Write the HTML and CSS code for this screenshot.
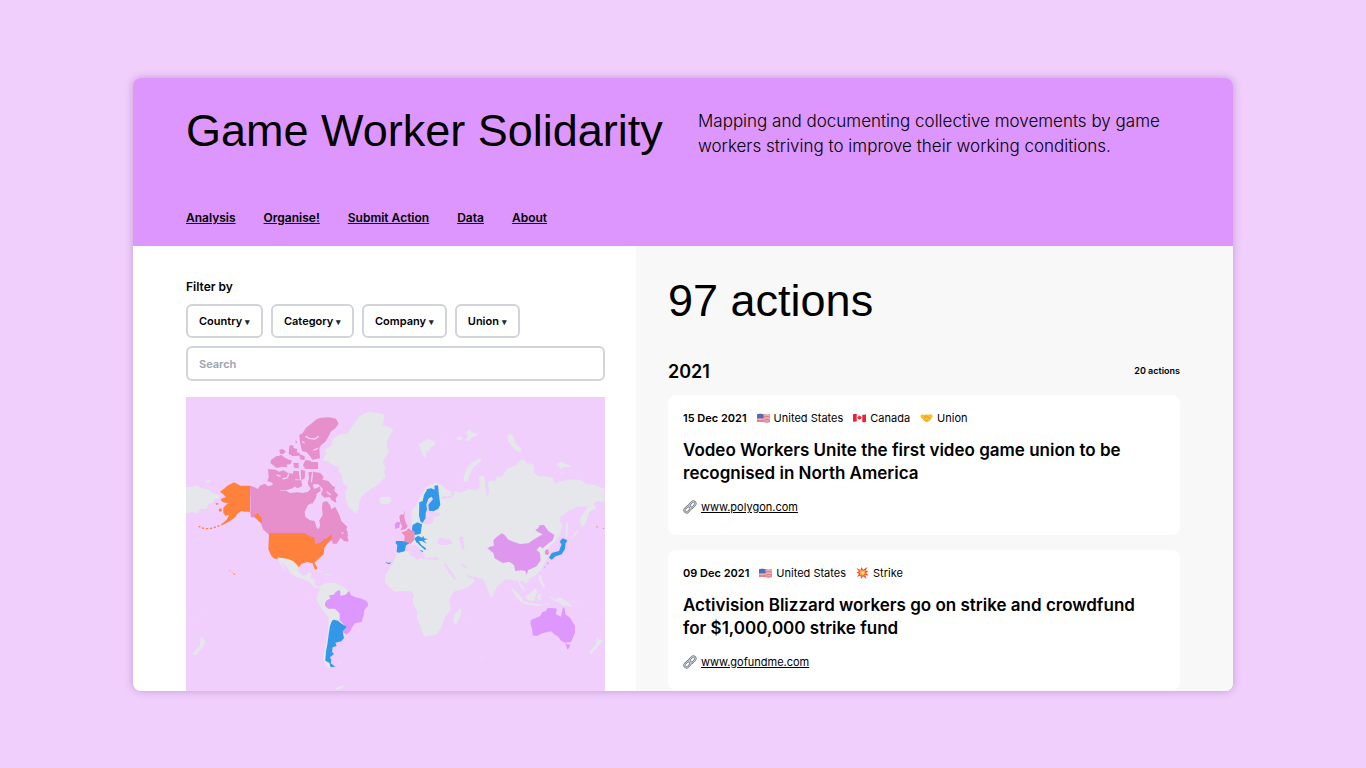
FILE: index.html
```
<!DOCTYPE html>
<html lang="en">
<head>
<meta charset="utf-8">
<meta name="viewport" content="width=device-width, initial-scale=1">
<title>Game Worker Solidarity</title>
<link rel="stylesheet" href="styles.css">
</head>
<body>
<svg class="sprite" aria-hidden="true">
  <symbol id="us" viewBox="0 0 14 10">
    <path fill="#f4e6ea" d="M0 1q3-1 7 0t7 0v8q-3 1-7 0T0 9z"/>
    <path stroke="#dc4a5c" stroke-width=".8" fill="none" d="M0 1.4q3-1 7 0t7 0M0 3q3-1 7 0t7 0M0 4.6q3-1 7 0t7 0M0 6.2q3-1 7 0t7 0M0 7.8q3-1 7 0t7 0M0 9q3-1 7 0t7 0"/>
    <path fill="#4a6fb5" d="M0 1q3-1 7 0v4.500q-4-1-7 0z"/>
  </symbol>
  <symbol id="ca" viewBox="0 0 14 10">
    <path fill="#fff" d="M0 1q3-1 7 0t7 0v8q-3 1-7 0T0 9z"/>
    <path fill="#f0202c" d="M0 1q2-.7 4-.4v8.200q-2-.2-4 .2zM10 1.500q2 .2 4-.5v8q-2 .7-4 .5zM7 2l.7 1.200.8-.3-.2 1.500 1.200-.6-.4 1.400-1.700 1.500H6.600L4.900 5.200l-.4-1.400 1.200.6-.2-1.500.8.3z"/>
  </symbol>
  <symbol id="hands" viewBox="0 0 14 10">
    <path fill="#fbc02f" d="M.3 2.500 2.500 1l2.300.8L7 1.300l2.500.3L11.800.8l2 2.200-1.500 2.500-3.800 3.700-2 .4-2.600-2.200L1.500 5z"/>
    <path fill="none" stroke="#d98b1d" stroke-width=".7" d="M7 1.500 4.800 3.700l1.400.8L8 3.400l3.300 2.800M4 6.500l1-1M5 7.600l1-1M6.200 8.500l1-1M8 8l1 .7M9.300 6.800l1 .8"/>
  </symbol>
  <symbol id="boom" viewBox="0 0 12 12">
    <path fill="#f04a32" d="m0 1 4 2 1-3 1.500 2.800L11 0 9 3.700l3 .3-2.500 2L12 8.500l-3.300-.2L10 12 6.500 9.300 4.500 12 4 8.500.5 10l2-3.200L0 5.500l2.500-1z"/>
    <path fill="#ffb13d" d="m2.500 2.800 2.200 1 .8-1.500L6.500 4 9 2.500 8 4.500l1.700.3L8.300 6l1.200 1.500-1.900-.2.6 2L6.300 8l-1 1.700-.4-2L3 8.200l.9-1.700-1.700-.8 1.600-.6z"/>
    <path fill="#ffe9a0" d="m4.500 4.500 1.500.3 1.300-.4-.2 1.300.5.800-1.300-.1-.8 1-.3-1.200-1-.3.700-.5z"/>
  </symbol>
  <symbol id="chain" viewBox="0 0 14 14">
    <g fill="none" stroke="#6f7982" stroke-width="2.200"><rect x="-3.600" y="-2.100" width="7.200" height="4.200" rx="2.100" transform="translate(4.600 9.200) rotate(-46)"/><rect x="-3.600" y="-2.100" width="7.200" height="4.200" rx="2.100" transform="translate(9.300 4.700) rotate(-46)"/></g>
    <g fill="none" stroke="#d3d9dd" stroke-width=".9"><rect x="-3.600" y="-2.100" width="7.200" height="4.200" rx="2.100" transform="translate(4.600 9.200) rotate(-46)"/><rect x="-3.600" y="-2.100" width="7.200" height="4.200" rx="2.100" transform="translate(9.300 4.700) rotate(-46)"/></g>
  </symbol>
</svg>

<div class="window">
  <header class="header">
    <div class="intro">
      <h1 class="title">Game Worker Solidarity</h1>
      <p class="tagline">Mapping and documenting collective movements by game workers striving to improve their working conditions.</p>
    </div>
    <nav class="nav">
      <a href="#">Analysis</a>
      <a href="#">Organise!</a>
      <a href="#">Submit Action</a>
      <a href="#">Data</a>
      <a href="#">About</a>
    </nav>
  </header>

  <main class="main">
    <section class="filters">
      <h2 class="filter-label">Filter by</h2>
      <div class="filter-row">
        <button class="filter" type="button" aria-haspopup="listbox">Country <span class="caret">▾</span></button>
        <button class="filter" type="button" aria-haspopup="listbox">Category <span class="caret">▾</span></button>
        <button class="filter" type="button" aria-haspopup="listbox">Company <span class="caret">▾</span></button>
        <button class="filter" type="button" aria-haspopup="listbox">Union <span class="caret">▾</span></button>
      </div>
      <input class="search" type="search" placeholder="Search" aria-label="Search">
      <svg class="map" viewBox="18 6 1257 882" role="img" aria-label="World map of actions by country">
        <!-- Eurasia -->
        <g class="land" transform="translate(600 0)">
          <path d="M95 345l15-15 8-22 12-20 12-14 23-12 20 8 14 11 16 9-3 14-20-1-12 6 20 2 20-8 6-16 16 6 24-12 18 5 14-6 2-14-4-17 10-8 7 4 3 38 6 23 5-16-4-26 8-8 14 2 6-14 12 2 20-25 25-10 12-15 11-3 8 10 20 5 4 12-2 12 16 12 22 0 20 4 5 18 12-5 35-8 30 2 20 12 24 3 28 12v38l-22-2-10 8 8 14-20 10-14 38-10 8-6-20 8-16 18-26-34 2-30 14-20 16-4 10 10 14-8 30-14 20-35 30 16 6-2 12-12 20-20 30-30 16-15 5-12-2-38-4-20 16-14 18-6 22-8-10-18-45-22-8-20-2-12-10 6 12 18 6 2 8-22 18-30 10-12-24-22-28-8-14-20-2-24-10-10-16-18-14-24-10 0-32z"/>
          <path d="M402 510l4 18 6 20 8 26 14 16-2-14-12-14 4-10 14 14 8-8-6-24-16-16z"/>
          <path d="M115 145l8 0 10-8 12-5 10 4 12 2-2 12-12 6-6 14-6-2-4 22-10-12-6-20zM300 190l6 4-6 8-18 13-12 20-6 22-14 4 2-20 8-20 16-20zM383 120l10-4 8 8 2 14 10 14 12 10-2 10-16-6-10-10-14-20zM532 203l14-2 14 6 16 6-8 4-14-2-10 6-12-8zM540 233l14 0-6 4zM228 128l16-5 4 10-12 3zM258 112l12-10 6 10 18 4-6 8-14 4-6 10-12-4 8-8zM0 75l10 4v8l-10 2zM180 135l7-2v5zM222 292l6-5 5 8-6 5zM0 308l20-3 12 6-4 12-16 5-12-4z"/>
          <path d="M600 405l-18 20-12 10 16-24zM558 382l6 2-2 40-6 8z"/>
        </g>
        <g class="sea" transform="translate(600 0)">
          <path d="M152 310l8 2 0 8-8 14 0 16 30 4-6 10-14 0-2 16-10 8-22-2 8-12 4-16-2-20 6-16zM172 440l6-10 12-2 8 6 10-4 10 16-20 4-24-2zM236 430l8-6 8 4-4 8 6 6-2 22-8-4-2-16zM60 458l44-10 12 10 20 24-4 8 40-4 6 10-44-4-30-12-44-8z"/>
          <path d="M190 503l8 4 30 42-4 6-10-12-18-26zM242 505l22 12-8 2-14-8z"/>
        </g>
        <!-- Africa, south-east Asia, Oceania -->
        <g class="land" transform="translate(600 435)">
          <path d="M52 39l20-6 14 1 4 12 14 6 10 8 8-6 22 6 36 2 10 16 12 20 14 24 30 0-4 12-28 32-6 14 4 30-16 20-8 20-6 16-14 18-32 6-6-4-10-30-10-20 2-22-12-22-2-14 4-14-10-10-24-2-24 4-26-24-3-10 2-20 16-22z"/>
          <path d="M240 205l5 6-4 16-11 24-8 0-2-12 4-16zM345 138l4 8-6 2zM392 143l10 6 20 20 10 16-6 4-20-20zM428 184l22 4 24 4 20 4-24 2-36-6zM438 168l12-8 16-16 6 12-4 8-4 16-10 4-14-6zM474 162l12 0 6-4-12 10 6 10-6 0-4 8-4-16zM505 168l12 4 6 8 14-8 22 10 8 6 12 14-18-6-10 2-16-12-10-2zM476 105l8 2 2 14 6 10 4 12-8 0-6-14-6-10zM482 88l4 2-2 8zM494 192l14-2-8 6zM652 288l4 10 12 2-6 10-10 12-18 20-6-4 4-8 16-14 2-14zM575 182l12 4-4 3zM592 192l8 4-2 3zM620 232l12 8-2 2zM664 222l10-4-8 6zM302 352l10 2-8 2zM260 236l8-2-2 4z"/>
          <path d="M482 18l20-12 12-14 4 4-12 22 2 10-14 6-6-8z"/>
        </g>
        <!-- Greenland, Iceland, Chukotka -->
        <g class="land">
          <path d="M537 65l12-8 20-7 22 5 20 2 2 16-10 14 18 8 8 2 11 8-10 14-8 16-2 16 6 16-6 16-8 10-4 14 10 8-6 12 4 18-12 14-18 16-22 12-18 16-8 18-2 20-6 14-8-4-16-16-8-20-2-24 8-14-16-14-2-22-10-14 4-8-26-12-10-8-16-2 6-14 8-6-8-6 4-10 16-8 4-22 20-12 24-4z"/>
          <path d="M598 312l8-6 10 2 14-3 5 12-10 10-14 0-10-6zM18 275l14 2 20-6 12 8 22 6 12 10 22 6-4 12-12-2-6 12-14 6-6 14-16-2-10 14-16-4-18 4zM76 260l10-6 6 4-6 6z"/>
        </g>
        <!-- Canada -->
        <path class="pink" d="M210 272l12 4 12 6 6-10 14-6 10 8 14-4 14 6 8 10 20 2 10 6 22-2 18 2 14-4 8-8-4-22 8 2 6 20 10-4 8-4 2 14-12 8-2 12-8 14-16 8-10 20 2 16 14 10 14 2 6 20 6 4 4-10-2-16 10-16-2-22 2-16 12-4 10 12 4 12 12-6 12 24 6 18 18 18-6 14-14 4 20 10 4 16-14-2-10-10-12 18-12 0-2-10-14 10-24 14-14-8-8-12-18-12-106-2-8-10-14-12-8-20-18-16-12-2z"/>
        <path class="pink" d="M410 73l12-5 26-1 20 4 8 15-10 14-14 10-6 14-10 16-12 10-6 8 2 32-22 4-8-10-10-12-14-4-6-26-2-22 10-6 10-16 18-14zM385 232l16-2 20 4 10 12-4 8 18 4 12 14 8 4-2 12 12 12-8 10 2 14-14-8-6-10-16 2-10-10 6-16-14-14-14 0-10 12-8-14 4-18zM264 222l22 2 12 6 12-4 14 8 14 2 8 16 0 20-8 8-20 6-22-2-8-8-12 0 2-12-16-6 4-12zM376 195l16 2 4 4 18 0 1 20-18 2-22-2-6-10zM288 187l16-8 8 8 12 6 12 4-4 10-12 2 2 8-16-2-16 4-18-14zM298 164l10-2 10 8-10 8-8-2zM328 152l10-2 4 10 10 2-2 10 10 2-4 8-18 2-12-8zM340 204l16 0 0 16-14-2zM340 228l16 0 4 26-14-2-8-10zM362 224l14 4-2 22-10 6zM344 256l20 0 2 18-14 6-10-8zM346 136l6 4-4 6zM272 196l16-12 10-2-16 16-10 10zM356 176l18 8 0 10-12 0zM392 312l8 2-2 12-10-4zM496 402l6 6 2 16-18-2z"/>
        <path class="bay" d="M376 124l12 6 16 2 12-8M366 140l8 4M418 198v24M398 232l-4 30M414 160l-14 6M326 236l-4 12-14 4M290 240l12 4M440 290l12 10M410 380l8 14"/>
        <!-- United States -->
        <g class="orange">
          <path d="M210 272v78l14 10 10-6 10 14 2 16-8-4-14-18-16-12-14 0-10-2-10 6-8 12-16 12-18 10-6-2 14-12 8-14-12 2-6-8 0-16 10-10 6-2-20-6-4-8 16-6-10-10-8-6 14-10 8-8 20-10 20 10z"/>
          <path d="M106 323l12 3-8 4zM116 342l8-2 2 8-8 2z"/>
          <path class="islands" d="M130 387l-14 6-14 5-14 3-12 0-12-3-8-4"/>
          <g transform="translate(0 435)">
            <path d="M267-21l106 0 14 8 16 6 2 18 16-2 8-10 12-4 14-12 2 10-12 12-12 18-2 20-20 18-8 8 9 14-2 7-6-2-6-18-18-4-16 6-8 10-12-12-18-6-16-4-26-4-10-8-9-20z"/>
            <path d="M147 90l4 2-3 2zM154 94l6 4-4-1zM160 98l6 5-4 2z"/>
          </g>
        </g>
        <!-- Latin America -->
        <g transform="translate(0 435)">
          <path class="land" d="M292 52L325 57 340 64 354 78 356 96 368 107 378 105 386 97 396 100 391 114 403 118 404 134 414 140 424 137 436 128 468 129 490 142 508 153 502 162 470 168 448 180 442 190 466 208 486 232 497 252 488 268 499 278 500 286 488 288 470 250 456 244 448 270 442 310 440 366 450 374 456 386 440 380 430 362 430 345 438 310 444 270 446 232 430 212 410 182 412 165 420 150 418 144 402 142 394 130 382 122 350 111 332 100 326 88 308 68 302 64 316 88 312 88 298 68zM402 88l14 2 14 8-12-2zM432 102l18 0 6 4-18 0zM372 166l6 2-4 2zM476 364l10 2-8 4zM466 446l14-8 14-2-8 8-14 6zM76 303l-14-15-2 28-18 20-4 8 10 2 10-14 14-14zM28 232l12 6-2 2zM70 220l8-2-4 4z"/>
          <path class="brazil" d="M435 190l6-10 10-4-4-10 14-2 6-8 10-6 4 4 0 14 16-4 10-12 6 14 14 6 18 4 16 8 4 12-12 14-2 16-6 20-20 4-10 14-4 10-12 10-14-12 10-14-16-18 0-20-14-14-20 0-10-8z"/>
          <path class="blue" d="M456 242l6-3 12 3 12 10 14 8-12 14 4 20-8 10-18 4 4 10-12 4-2 14 6 6-12 10 4 8-2 10 14 10-14 2-4-14-12-6 2-28 4-20 4-30 4-26z"/>
          <path class="blue" d="M615 69l6-2 0 2zM622 71l8-2 4-4-4 7z"/>
          <path class="pink" d="M406 6l8-6 12-2 4 4-16 8zM454-10l14 4 0 10-10-6z"/>
        </g>
        <!-- Europe -->
        <g transform="translate(600 0)">
          <path class="blue" d="M118 322l10-4 4-18 10-18 12-2 10 4-1-12 11-1 3 30 4 28-6 12-14 8-14-2-2-18 14-16-4-8-10 6-6 18 2 14-4 12 0 14-10 16-6-6-4-18zM98 390l14-8 14 6-2 14-2 14-16 4-8-6-2-14zM104 430l10-8 12 6 4-6 2 8 12 2-12 4 8 10-14-8-10 0-6 6z"/>
          <path class="pink" d="M58 364l6-6 6 2 4-14-1 22 4 14 6 12-6 8-16 4 6-12-6-10z"/>
          <path class="china" d="M44 388l8-8 8 2-2 16-12 4z"/>
          <path class="france" d="M64 412l14-4 8-8 8 6 10 4 0 12-2 14-10 10-20-4 2-18z"/>
          <path class="blue" d="M48 438l20 0 20 7-10 6-4 18-18 4-6-2 2-20-5-6zM102 430l12 4 10 16 14 10-2 6-18-16-10-12zM118 464l12 4-2 4zM540 438l8-8 14 6-4 8-16 2zM545 446l12-4-2 20-10 16-18 6-12 10-8-6 8-14 22-6 6-16zM500 508l4-6 1 3zM492 517l4-3 0 3zM16 503l16 0-6 4z"/>
          <path class="pink" d="M496 466l8-4 3 12-4 6-8-2z"/>
        </g>
        <path class="china" d="M922 460L930 455 942 452 940 436 950 426 965 415 974 420 985 434 1000 440 1020 447 1045 445 1060 434 1088 418 1072 410 1066 404 1075 400 1078 391 1092 390 1105 408 1123 420 1118 436 1104 446 1088 460 1080 454 1070 464 1080 474 1082 496 1070 514 1044 526 1040 540 1036 528 1024 526 1006 528 1002 510 988 500 968 504 944 490 940 474z"/>
        <path class="brazil" transform="translate(600 435)" d="M453 240l14-6 14-6 6-12 10-2 6-10 14 0 14 2-4 16 16 8 6-28 4 2 4 20 12 8 16 26 0 20-12 28-18 2-12-6-10-14-6-2-14-12-26 6-16 8-14-2 0-16-6-20zM556 310l8 4 6-2-2 12-6 4z"/>
        <path class="orange" d="M1248 393l6 2-2 4zM1268 398l5 1-2 4z"/>
      </svg>
    </section>

    <section class="actions">
      <h2 class="total">97 actions</h2>
      <div class="year-row">
        <h3 class="year">2021</h3>
        <span class="year-count">20 actions</span>
      </div>
      <article class="card">
        <div class="meta">
          <time class="date" datetime="2021-12-15">15 Dec 2021</time>
          <span class="tag"><svg class="flag"><use href="#us"/></svg>United States</span>
          <span class="tag"><svg class="flag"><use href="#ca"/></svg>Canada</span>
          <span class="tag"><svg class="flag"><use href="#hands"/></svg>Union</span>
        </div>
        <h4 class="headline">Vodeo Workers Unite the first video game union to be recognised in North America</h4>
        <div class="source"><svg class="chain"><use href="#chain"/></svg><a href="#">www.polygon.com</a></div>
      </article>
      <article class="card">
        <div class="meta">
          <time class="date" datetime="2021-12-09">09 Dec 2021</time>
          <span class="tag"><svg class="flag"><use href="#us"/></svg>United States</span>
          <span class="tag"><svg class="flag boom"><use href="#boom"/></svg>Strike</span>
        </div>
        <h4 class="headline">Activision Blizzard workers go on strike and crowdfund for $1,000,000 strike fund</h4>
        <div class="source"><svg class="chain"><use href="#chain"/></svg><a href="#">www.gofundme.com</a></div>
      </article>
    </section>
  </main>
</div>
</body>
</html>
```
FILE: styles.css
```
* { box-sizing: border-box; }

body {
  margin: 0;
  height: 100vh;
  padding: 78px 133px 77px;
  background: #f0cffc;
  color: #000;
  font-family: Inter, "Liberation Sans", sans-serif;
  overflow: hidden;
}

h1, h2, h3, h4, p { margin: 0; }
a { color: inherit; text-underline-offset: 1px; }
.sprite { display: none; }

.window {
  display: flex;
  flex-direction: column;
  height: 100%;
  border-radius: 8px;
  overflow: hidden;
  box-shadow: 0 0 8px rgba(80, 20, 110, 0.28);
}

.header {
  flex: none;
  padding: 28px 53px 19px;
  background: #dd96fd;
}

.intro {
  display: flex;
  align-items: flex-start;
  gap: 32px;
  min-height: 103px;
}

.title {
  flex: none;
  width: 480px;
  font: 400 45px/50px "Liberation Sans", Arial, sans-serif;
  white-space: nowrap;
}

.tagline {
  max-width: 480px;
  padding-top: 3px;
  font-size: 17px;
  line-height: 25px;
  font-weight: 300;
}

.nav {
  display: flex;
  gap: 28px;
  font-size: 12px;
  line-height: 18px;
  font-weight: 600;
}

.main {
  flex: 1;
  min-height: 0;
  display: grid;
  grid-template-columns: 503fr 597fr;
  background: #fff;
}

.filters {
  padding: 32px 31px 0 53px;
  overflow: hidden;
}

.filter-label {
  font-size: 12px;
  line-height: 18px;
  font-weight: 600;
}

.filter-row {
  display: flex;
  gap: 8px;
  margin: 8px 0;
}

.filter {
  height: 34px;
  padding: 0 11px;
  border: 2px solid #d1d5db;
  border-radius: 6px;
  background: #fff;
  color: #000;
  font: 600 11px/16px Inter, sans-serif;
}

.caret { font-size: 9px; color: #1f2937; }

.search {
  display: block;
  width: 100%;
  height: 35px;
  padding: 0 11px;
  border: 2px solid #d1d5db;
  border-radius: 6px;
  background: #fff;
  font: 600 11px/16px Inter, sans-serif;
}

.search::placeholder { color: #9ca3af; opacity: 1; }

.map {
  display: block;
  width: 100%;
  margin-top: 16px;
  background: #f0cffc;
}

.land { fill: #e5e7eb; }
.sea { fill: #f0cffc; }
.pink { fill: #e78fcb; }
.france { fill: #ec8fb8; }
.orange { fill: #ff813b; }
.blue { fill: #3398ea; }
.brazil { fill: #de97fd; }
.china { fill: #df96ef; }
.bay { fill: none; stroke: #f0cffc; stroke-width: 4; }
.islands { fill: none; stroke: #ff813b; stroke-width: 4; stroke-dasharray: 7 5; }

.actions {
  padding: 29px 53px 0 32px;
  background: #f8f8f8;
  overflow: hidden;
}

.total {
  font: 400 45px/52px "Liberation Sans", Arial, sans-serif;
}

.year-row {
  display: flex;
  align-items: flex-start;
  justify-content: space-between;
  margin: 33px 0 11px;
}

.year { font-size: 18px; line-height: 24px; font-weight: 600; }
.year-count { font-size: 9px; line-height: 22px; font-weight: 600; }

.card {
  margin-bottom: 15px;
  padding: 15px 15px 19px;
  border-radius: 8px;
  background: #fff;
}

.meta {
  display: flex;
  align-items: center;
  gap: 10px;
  font-size: 11px;
  line-height: 16px;
}

.date { font-weight: 600; }
.tag { display: flex; align-items: center; gap: 4px; }
.flag { width: 13px; height: 10px; }
.boom { height: 12px; }

.headline {
  max-width: 468px;
  margin: 13px 0;
  font-size: 17px;
  line-height: 23px;
  font-weight: 600;
}

.source {
  display: flex;
  align-items: center;
  gap: 4px;
  font-size: 11px;
  line-height: 18px;
}

.chain { width: 14px; height: 14px; }
```
